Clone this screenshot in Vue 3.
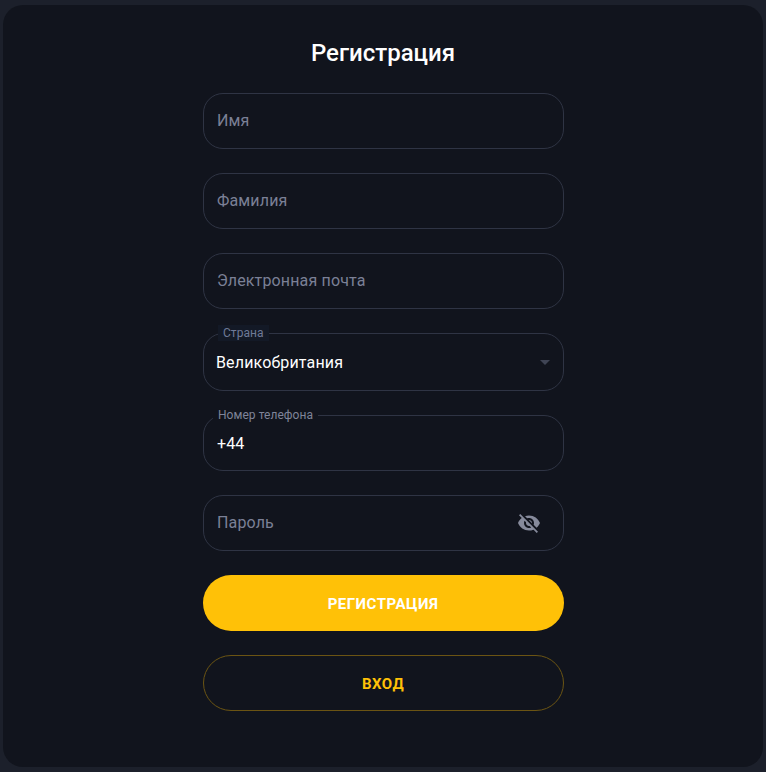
<template>
  <div class="page">
    <section class="card">
      <h1>Регистрация</h1>
      <form class="form" @submit.prevent>
        <div class="field">
          <input type="text" placeholder="Имя" />
        </div>
        <div class="field">
          <input type="text" placeholder="Фамилия" />
        </div>
        <div class="field">
          <input type="email" placeholder="Электронная почта" />
        </div>
        <div class="field select-field">
          <span class="float-label country-label">Страна</span>
          <span class="select-value">{{ country }}</span>
          <span class="arrow"></span>
        </div>
        <div class="field">
          <span class="float-label">Номер телефона</span>
          <input v-model="phone" type="tel" />
        </div>
        <div class="field">
          <input type="password" placeholder="Пароль" />
          <svg class="eye" viewBox="0 0 24 24" width="24" height="24">
            <path
              fill="currentColor"
              d="M12 7c2.76 0 5 2.24 5 5 0 .65-.13 1.26-.36 1.83l2.92 2.92c1.51-1.26 2.7-2.89 3.43-4.75-1.73-4.39-6-7.5-11-7.5-1.4 0-2.74.25-3.98.7l2.16 2.16C10.74 7.13 11.35 7 12 7zM2 4.27l2.28 2.28.46.46C3.08 8.3 1.78 10.02 1 12c1.73 4.39 6 7.5 11 7.5 1.55 0 3.03-.3 4.38-.84l.42.42L19.73 22 21 20.73 3.27 3 2 4.27zM7.53 9.8l1.55 1.55c-.05.21-.08.43-.08.65 0 1.66 1.34 3 3 3 .22 0 .44-.03.65-.08l1.55 1.55c-.67.33-1.41.53-2.2.53-2.76 0-5-2.24-5-5 0-.79.2-1.53.53-2.2zm4.31-.78l3.15 3.15.02-.16c0-1.66-1.34-3-3-3l-.17.01z"
            />
          </svg>
        </div>
        <button class="btn btn-primary" type="submit">Регистрация</button>
        <button class="btn btn-outline" type="button">Вход</button>
      </form>
    </section>
  </div>
</template>

<script setup>
import { ref } from "vue";

const country = ref("Великобритания");
const phone = ref("+44");
</script>

<style>
html,
body {
  margin: 0;
  background: #1c202b;
}
</style>

<style scoped>
.page {
  box-sizing: border-box;
  width: 766px;
  height: 772px;
  padding: 5px 3px;
  font-family: Roboto, "Liberation Sans", sans-serif;
}

.card {
  box-sizing: border-box;
  height: 762px;
  padding-top: 32px;
  background: #11141d;
  border-radius: 20px;
}

h1 {
  margin: 0 0 24px;
  height: 32px;
  font-size: 24px;
  line-height: 32px;
  font-weight: 500;
  text-align: center;
  color: #fff;
}

.form {
  width: 361px;
  margin-left: 200px;
  display: flex;
  flex-direction: column;
  gap: 24px;
}

.field {
  position: relative;
  box-sizing: border-box;
  height: 56px;
  display: flex;
  align-items: center;
  padding: 0 13px;
  border: 1px solid #2f3444;
  border-radius: 20px;
}

.field input {
  flex: 1;
  min-width: 0;
  padding: 0;
  border: none;
  outline: none;
  background: none;
  font-family: inherit;
  font-size: 16px;
  letter-spacing: 0.15px;
  color: #fff;
}

/* placeholder sits a pixel above typed text */
.field input:placeholder-shown {
  padding-bottom: 2px;
}

.field input::placeholder {
  color: #7b8096;
  opacity: 1;
}

.select-field {
  height: 58px;
  padding: 0 12px;
}

.select-value {
  font-size: 16px;
  letter-spacing: 0.15px;
  color: #fff;
}

.arrow {
  position: absolute;
  right: 13px;
  top: 26px;
  width: 0;
  height: 0;
  border-left: 5px solid transparent;
  border-right: 5px solid transparent;
  border-top: 5px solid #3f4454;
}

.float-label {
  position: absolute;
  left: 9px;
  top: -9px;
  padding: 0 5px;
  background: #11141d;
  font-size: 12px;
  line-height: 16px;
  letter-spacing: 0.05px;
  color: #7f8499;
}

.country-label {
  left: 14px;
  background: #131926;
  color: #6f7a98;
}

.eye {
  color: #868a9b;
  margin-right: 9px;
}

.btn {
  box-sizing: border-box;
  height: 56px;
  padding: 1px 1px 0 0;
  border-radius: 28px;
  font-family: inherit;
  font-size: 15px;
  font-weight: 700;
  letter-spacing: 0.5px;
  text-transform: uppercase;
  cursor: pointer;
}

.btn-primary {
  border: none;
  background: #ffc107;
  color: #fff;
}

.btn-outline {
  border: 1px solid #6b5413;
  background: none;
  color: #ffc107;
}
</style>
